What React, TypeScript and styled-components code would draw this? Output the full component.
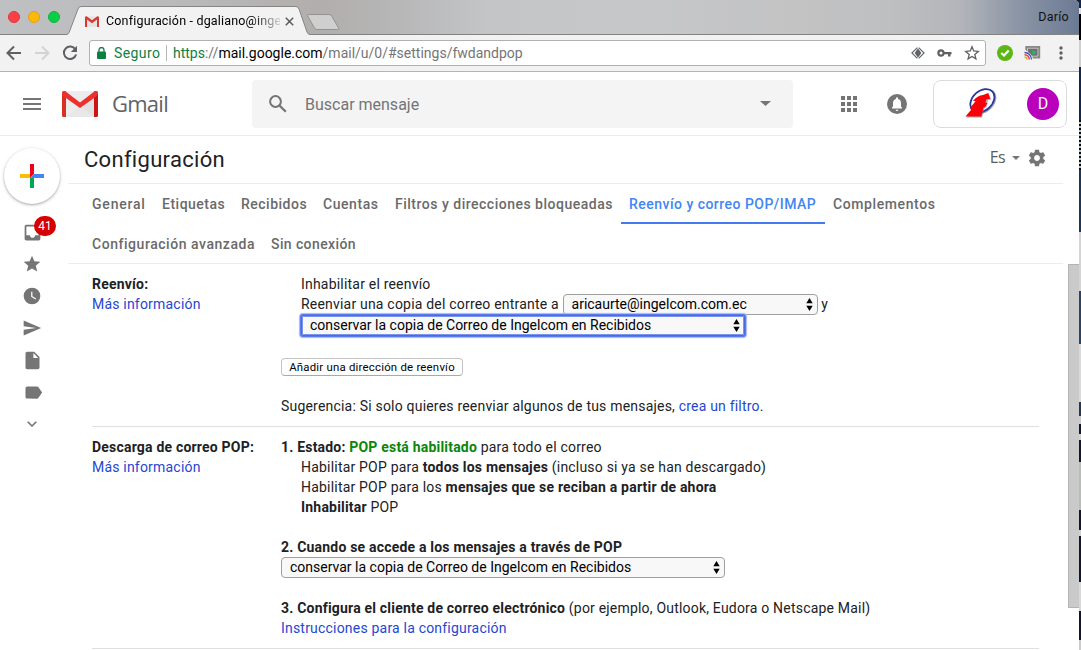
import React from "react";
import styled, { createGlobalStyle, css } from "styled-components";

const Global = createGlobalStyle`
  *, *::before, *::after { box-sizing: border-box; }
  body { margin: 0; overflow: hidden; background: #fff; font-family: Roboto, "Liberation Sans", sans-serif; }
  svg { display: block; flex: none; }
`;

const Desktop = styled.div`
  display: flex;
  width: 1081px;
  height: 650px;
  background: #101c38;
  overflow: hidden;
`;
const Window = styled.div`
  display: flex;
  flex-direction: column;
  width: 1079px;
  height: 650px;
  background: #fff;
  border-top-right-radius: 5px;
  overflow: hidden;
`;
const DesktopEdge = styled.div`
  width: 2px;
  background: linear-gradient(
    #13264a 0 8px, #ddd 8px 14px, #000 14px 40px, #cfcfcf 40px 67px, #10264a 67px 120px,
    transparent 120px 170px, #1c3658 170px 232px, #d4d4d4 232px 291px, #2b4263 291px 344px,
    #dadada 344px 402px, #26364f 402px 416px, #c9c9c9 416px 424px, #14142a 424px 434px,
    #d0d0d0 434px 440px, #14142a 440px 462px, #b9bdb9 462px 510px, #14142a 510px 530px,
    #d0d0d0 530px 536px, #14142a 536px 582px, #d8d8d8 582px 611px, #14142a 611px 640px, #ccc 640px
  ), repeating-linear-gradient(#060c14 0 2px, #b9c2bf 2px 4px);
`;

/* Browser frame */
const TitleBar = styled.div`
  display: flex;
  align-items: center;
  height: 35px;
  padding-right: 10px;
  border-bottom: 1px solid #828282;
  background: linear-gradient(90deg, #bfc0c2 0, #b9b9ba 190px, #b1aeac 320px, #b7b7b8 400px, #c4c5c7 490px, #c6c7c9 640px, #c3c3c4 790px, #bebfc0 890px, #b2b5ba 960px, #8b94a5 1020px, #6b7a94 1079px);
`;
const Lights = styled.div`
  display: flex;
  gap: 8px;
  width: 67px;
  padding-left: 8px;
`;
const Light = styled.span<{ $color: string; $edge: string }>`
  width: 12px;
  height: 12px;
  border-radius: 50%;
  background: ${(p) => p.$color};
  border: 1px solid ${(p) => p.$edge};
`;
const Tab = styled.div`
  position: relative;
  display: flex;
  align-items: center;
  align-self: flex-end;
  width: 243px;
  height: 29px;
  margin-bottom: -1px;
  padding: 1px 0 0 18px;
`;
const TabShape = styled.svg`
  position: absolute;
  left: 0;
  top: 0;
`;
const TabLabel = styled.span`
  position: relative;
  width: 174px;
  height: 18px;
  margin: 0 5px 0 7px;
  white-space: nowrap;
  font: 12.5px/18px Roboto, sans-serif;
  letter-spacing: 0.18px;
  color: #000;
  mask-image: linear-gradient(90deg, #000 146px, transparent 178px);
`;
const TabIcon = styled.svg`
  position: relative;
`;
const NewTab = styled.svg`
  margin-left: -5px;
  margin-top: 10px;
`;
const ProfileName = styled.span`
  margin-left: auto;
  font: 12.5px/16px Roboto, sans-serif;
  letter-spacing: 0.25px;
  color: #111;
`;
const Toolbar = styled.div`
  display: flex;
  align-items: center;
  height: 37px;
  padding: 0 9px 0 5px;
  background: #f2f2f2;
  border-bottom: 1px solid #b3b3b3;
`;
const NavButtons = styled.div`
  display: flex;
  flex: none;
  gap: 10px;
  width: 84px;
`;
const Omnibox = styled.div`
  display: flex;
  flex: none;
  align-items: center;
  width: 897px;
  height: 26px;
  padding: 0 5px 0 7px;
  border: 1px solid #b1b1b1;
  border-radius: 3px;
  background: #fff;
  font: 14px/22px Roboto, sans-serif;
`;
const Secure = styled.span`
  width: 46px;
  margin-left: 8px;
  color: #0b8043;
  letter-spacing: 0.4px;
  white-space: nowrap;
`;
const Divider = styled.span`
  width: 1px;
  height: 16px;
  margin: 0 6px;
  background: #b5b5b5;
`;
const Url = styled.span`
  flex: 1;
  color: #757575;
  letter-spacing: 0;
  white-space: nowrap;
  b { font-weight: 400; color: #0b8043; }
  strong { font-weight: 400; color: #000; }
`;
const OmniIcons = styled.div`
  display: flex;
  align-items: center;
  gap: 12px;
`;
const Extensions = styled.div`
  display: flex;
  align-items: center;
  gap: 11px;
  margin-left: 11px;
`;

/* Gmail header */
const Header = styled.header`
  display: flex;
  align-items: center;
  height: 64px;
  padding: 0 12px 0 23px;
  border-bottom: 1px solid #ebebeb;
`;
const Brand = styled.div`
  display: flex;
  align-items: center;
  width: 229px;
`;
const BrandName = styled.span`
  margin: -2px 0 0 14px;
  font: 22px/28px "Open Sans", Roboto, sans-serif;
  letter-spacing: -0.75px;
  color: #5f6368;
`;
const Search = styled.div`
  display: flex;
  align-items: center;
  width: 541px;
  height: 48px;
  padding: 0 22px 0 17px;
  border-radius: 4px;
  background: #f4f4f4;
`;
const SearchText = styled.span`
  flex: 1;
  margin: 2px 0 0 18px;
  font-size: 16px;
  color: #747474;
`;
const HeaderIcons = styled.div`
  display: flex;
  align-items: center;
  gap: 30px;
  width: 140px;
  padding-left: 48px;
`;
const Account = styled.div`
  display: flex;
  align-items: center;
  justify-content: space-between;
  width: 134px;
  height: 48px;
  padding: 0 7px 0 29px;
  border: 1px solid #dadce0;
  border-radius: 8px;
`;
const Avatar = styled.span`
  width: 32px;
  height: 32px;
  border-radius: 50%;
  background: #b900bd;
  color: #fff;
  font: 16px/32px Roboto, sans-serif;
  text-align: center;
`;

/* Body */
const Body = styled.div`
  display: flex;
  flex: 1;
  min-height: 0;
`;
const Rail = styled.nav`
  display: flex;
  flex-direction: column;
  align-items: center;
  width: 68px;
  padding: 12px 4px 0 0;
`;
const Compose = styled.button`
  display: flex;
  align-items: center;
  justify-content: center;
  width: 56px;
  height: 56px;
  margin-bottom: 12px;
  border: 0;
  border-radius: 50%;
  background: #fff;
  box-shadow: 0 1px 2px rgba(60, 64, 67, 0.32), 0 1px 3px 1px rgba(60, 64, 67, 0.12);
`;
const RailItem = styled.div`
  position: relative;
  display: flex;
  align-items: center;
  justify-content: center;
  width: 56px;
  height: 32px;
`;
const Badge = styled.span`
  position: absolute;
  left: 30px;
  top: 0;
  width: 22px;
  height: 20px;
  border-radius: 10px;
  background: #d50000;
  color: #fff;
  font: 12px/20px Roboto, sans-serif;
  text-align: center;
`;
const Main = styled.main`
  display: flex;
  flex-direction: column;
  width: 995px;
`;
const TitleRow = styled.div`
  display: flex;
  align-items: center;
  height: 48px;
  padding: 0 16px 0 16px;
  border-bottom: 1px solid #ececec;
`;
const Title = styled.h1`
  flex: 1;
  margin: 0;
  font: 400 22px/28px Roboto, sans-serif;
  letter-spacing: 0.3px;
  color: #202124;
`;
const Lang = styled.span`
  margin-top: -5px;
  font: 16px/20px "Open Sans", sans-serif;
  letter-spacing: -0.6px;
  color: #5c5c5c;
`;
const LangIcons = styled.div`
  display: flex;
  align-items: center;
  gap: 7px;
  margin: -3px 0 0 7px;
`;
const Tabs = styled.div`
  display: flex;
  flex-wrap: wrap;
  height: 80px;
  padding: 0 100px 0 16px;
  border-bottom: 1px solid #ececec;
`;
const SettingsTab = styled.a<{ $w: number; $ls: number; $active?: boolean }>`
  width: ${(p) => p.$w}px;
  height: 40px;
  padding: 0 8px;
  font: 500 14px/40px Roboto, sans-serif;
  letter-spacing: ${(p) => p.$ls}px;
  white-space: nowrap;
  color: #6a6a6a;
  ${(p) => p.$active && css`
    color: #4285f4;
    box-shadow: inset 0 -2px #4479f2;
  `}
`;
const Content = styled.div`
  padding: 0 24px;
`;
const Section = styled.section<{ $h: number }>`
  display: flex;
  height: ${(p) => p.$h}px;
  padding-top: 10px;
  border-bottom: 1px solid #dfdfdf;
  font-size: 14px;
  color: #202124;
`;
const Side = styled.div`
  width: 189px;
`;
const Fields = styled.div`
  flex: 1;
`;
const Line = styled.div<{ $indent?: boolean; $gap?: number }>`
  display: flex;
  align-items: center;
  height: 20px;
  margin-top: ${(p) => p.$gap ?? 0}px;
  padding-left: ${(p) => (p.$indent ? 20 : 0)}px;
  letter-spacing: 0.2px;
  white-space: pre;
`;
const Link = styled.a`
  color: #2546d2;
`;
const Ok = styled.b`
  color: #0a860a;
`;
const SelectBox = styled.div<{ $w: number; $focus?: boolean }>`
  display: flex;
  flex: none;
  align-items: center;
  justify-content: space-between;
  width: ${(p) => p.$w}px;
  height: 21px;
  padding: 0 4px 0 8px;
  border: 1px solid #a0a0a0;
  border-radius: 4px;
  background: #f8f8f8;
  color: #000;
  letter-spacing: 0;
  white-space: nowrap;
  ${(p) => p.$focus && css`
    border-color: #4a6be0;
    border-radius: 2px;
    box-shadow: 0 0 0 1px #5b7cf0, 0 0 1px 2px #a3b6fa, inset 0 0 0 1px #7b95ee;
  `}
`;
const AddButton = styled.button`
  display: block;
  width: 182px;
  height: 18px;
  margin-top: 23px;
  padding: 1px 0 0;
  border: 1px solid #c4c4c4;
  border-bottom-color: #a9a9a9;
  border-radius: 4px;
  background: #fff;
  font: 11.4px/15px Roboto, sans-serif;
  letter-spacing: 0.22px;
  color: #000;
`;
const ScrollTrack = styled.div`
  display: flex;
  width: 11px;
  margin: 128px 0 0 5px;
`;
const ScrollThumb = styled.div`
  width: 11px;
  height: 344px;
  background: #cacaca;
  border: 1px solid #b4b4b4;
  border-right: 0;
`;

const Icon = ({ d, size = 24, color = "#757575", box = "0 0 24 24" }: { d: string; size?: number; color?: string; box?: string }) => (
  <svg width={size} height={size} viewBox={box} fill={color}>
    <path d={d} />
  </svg>
);

const Envelope = ({ w, h }: { w: number; h: number }) => (
  <svg width={w} height={h} viewBox="0 0 36 26" preserveAspectRatio="none">
    <rect x="2" width="32" height="26" rx="1" fill="#ececec" />
    <path d="M18 15 5 26h26z" fill="#e0e0e0" />
    <path d="M5 26 18 15 31 26z" fill="#e8e8e8" />
    <path d="M18 15 32 3v23z" fill="#dadada" opacity=".6" />
    <path d="M0 2.5C0 0 2.6-.6 4 .8V26H1.5Q0 26 0 24.5z" fill="#d93025" />
    <path d="M36 2.5C36 0 33.4-.6 32 .8V26h2.500Q36 26 36 24.500z" fill="#cc1417" />
    <path d="M0 2.600C0 0 2.500-.5 4 .8L18 11.500 32 .8C33.500-.5 36 0 36 2.600 36 4 35.300 4.600 34.500 5.200L18 17 1.500 5.200C.7 4.600 0 4 0 2.600z" fill="#ee2f2f" />
  </svg>
);

const Arrows = () => (
  <svg width="7" height="13" viewBox="0 0 7 13">
    <path d="M3.500 0 6.700 5.300H.3zM3.500 13 6.700 7.700H.3z" fill="#000" />
  </svg>
);

const Caret = ({ w, h }: { w: number; h: number }) => (
  <svg width={w} height={h} viewBox="0 0 10 5" preserveAspectRatio="none">
    <path d="M0 0h10L5 5z" fill="#757575" />
  </svg>
);

const CompanyLogo = () => (
  <svg width="34" height="32" viewBox="0 0 34 32">
    <ellipse cx="20.200" cy="13.400" rx="14" ry="10" transform="rotate(-42 20.200 13.400)" fill="#fff" stroke="#a5a9bb" strokeWidth="1.500" />
    <ellipse cx="19.400" cy="12.700" rx="13.600" ry="9.800" transform="rotate(-42 19.400 12.700)" fill="#fff" stroke="#2b3a98" strokeWidth="1.800" />
    <path d="M3.500 29.500 10 21.500H8.500L12 14h2L19 9l7-2.500L28.500 11.500 25 12 23.500 19l-2 1.500L19 29.500z" fill="#77777f" opacity=".6" />
    <path d="M2.500 28.500 9.200 20.500H6.700L12.700 13H9.900Q14.500 7.600 20 7L25.300 5 27.200 10.700 23.500 11.200 22.300 14.500 24.500 15 22 19 20.500 19.500 18.300 28.500z" fill="#fb0009" />
  </svg>
);

const railIcons: { d: string; size: number; box?: string }[] = [
  { size: 20, d: "M12 17.270 18.180 21l-1.640-7.030L22 9.240l-7.190-.61L12 2 9.190 8.630 2 9.240l5.460 4.730L5.820 21z" },
  { size: 20, d: "M12 2a10 10 0 1 0 0 20 10 10 0 0 0 0-20zm4.200 14.200L11 13V7h1.500v5.200l4.500 2.700z" },
  { size: 20, d: "M2.010 21 23 12 2.010 3 2 10l15 2-15 2z" },
  { size: 21, d: "M14 2H6c-1.100 0-2 .9-2 2v16c0 1.100.9 2 2 2h12c1.100 0 2-.9 2-2V8zm-1 7V3.500L18.500 9z" },
  { size: 21, box: "-1 0 24 24", d: "M17.630 5.840C17.270 5.330 16.670 5 16 5L5 5.010C3.900 5.010 3 5.900 3 7v10c0 1.100.9 1.990 2 1.990L16 19c.67 0 1.270-.33 1.630-.84L22 12z" },
];

const tabs: { label: string; w: number; ls: number; active?: boolean }[] = [
  { label: "General", w: 70, ls: 0.8 },
  { label: "Etiquetas", w: 79, ls: 0.5 },
  { label: "Recibidos", w: 82, ls: 0.5 },
  { label: "Cuentas", w: 72, ls: 0.55 },
  { label: "Filtros y direcciones bloqueadas", w: 234, ls: 0.5 },
  { label: "Reenvío y correo POP/IMAP", w: 204, ls: 0.47, active: true },
  { label: "Complementos", w: 118, ls: 0.6 },
  { label: "Configuración avanzada", w: 179, ls: 0.54 },
  { label: "Sin conexión", w: 102, ls: 0.4 },
];

const keepCopy = "conservar la copia de Correo de Ingelcom en Recibidos";

export default function App() {
  return (
    <Desktop>
      <Global />
      <Window>
        <TitleBar>
          <Lights>
            <Light $color="#fc4048" $edge="#e2343d" />
            <Light $color="#fdb90b" $edge="#e0a210" />
            <Light $color="#08cf45" $edge="#12b33d" />
          </Lights>
          <Tab>
            <TabShape width="243" height="29" viewBox="0 0 243 29">
              <path d="M0 29V28.500Q1.500 28 2.300 26L11 3Q12 .5 14 .5H229Q231 .5 232 3L240 26Q241 28.500 243 28.500V29z" fill="#f2f2f2" />
              <path d="M0 28.500Q1.500 28 2.300 26L11 3Q12 .5 14 .5H229Q231 .5 232 3L240 26Q241 28.500 243 28.500" fill="none" stroke="#858585" />
            </TabShape>
            <TabIcon width="14" height="11" viewBox="0 0 14 11">
              <path d="M1 .5h12V11H1z" fill="#e4e4e4" />
              <path d="M0 1.500Q.2-.2 2 .4L7 4.300 12 .4Q13.800-.2 14 1.500V11H12V3.500L7 7.300 2 3.500V11H0z" fill="#d8392f" />
            </TabIcon>
            <TabLabel>Configuración - dgaliano@inge</TabLabel>
            <TabIcon width="9" height="9" viewBox="0 0 9 9">
              <path d="M.8.8 8.200 8.200M8.200.8.800 8.200" stroke="#5a5a5a" strokeWidth="1.500" />
            </TabIcon>
          </Tab>
          <NewTab width="36" height="17" viewBox="0 0 36 17">
            <path d="M3.500.5H24Q26 .5 27 2.500L33.500 14Q34.500 15.500 32.500 15.500H12Q10 15.500 9.200 13.500L2.700 2Q2.200.5 3.500.5z" fill="#cfcfcf" stroke="#929292" />
          </NewTab>
          <ProfileName>Darío</ProfileName>
        </TitleBar>

        <Toolbar>
          <NavButtons>
            <svg width="18" height="18" viewBox="0 0 18 18" fill="none" stroke="#5f6063" strokeWidth="2">
              <path d="M16 9H3.500M9 2.500 2.500 9 9 15.500" />
            </svg>
            <svg width="18" height="18" viewBox="0 0 18 18" fill="none" stroke="#d3d3d3" strokeWidth="2">
              <path d="M2 9H14.500M9 2.500 15.500 9 9 15.500" />
            </svg>
            <svg width="18" height="18" viewBox="0 0 18 18">
              <path d="M14.400 5.500A6.200 6.200 0 1 0 15.100 10.500" fill="none" stroke="#5f6063" strokeWidth="2" />
              <path d="M16 1.800V8H9.800z" fill="#5f6063" />
            </svg>
          </NavButtons>
          <Omnibox>
            <svg width="9" height="12" viewBox="0 0 9 12">
              <rect y="4.500" width="9" height="7.500" rx="1" fill="#0b8043" />
              <path d="M2 5V3a2.500 2.500 0 0 1 5 0V5" fill="none" stroke="#0b8043" strokeWidth="1.300" />
            </svg>
            <Secure>Seguro</Secure>
            <Divider />
            <Url><b>https</b>://<strong>mail.google.com</strong>/mail/u/0/#settings/fwdandpop</Url>
            <OmniIcons>
              <svg width="14" height="12" viewBox="0 0 14 12">
                <path d="M7 1.200 10.300 6 7 10.800 3.700 6z" fill="#5f6368" />
                <path d="M6.300.7.900 6l5.400 5.300M7.700.7 13.100 6l-5.400 5.300" fill="none" stroke="#5f6368" strokeWidth="1.100" />
              </svg>
              <svg width="15" height="8" viewBox="0 0 15 8">
                <circle cx="4" cy="4" r="2.600" fill="none" stroke="#5f6063" strokeWidth="2.200" />
                <path d="M7 2.900h7.500v2.300H13.500V7.500H11V5.200H7z" fill="#5f6063" />
              </svg>
              <svg width="16" height="16" viewBox="0 0 16 16">
                <path d="M8 1.800 9.700 6l4.600.4-3.500 3 1.100 4.500L8 11.500l-3.900 2.400 1.100-4.500-3.500-3L6.300 6z" fill="none" stroke="#5f6063" strokeWidth="1.300" />
              </svg>
            </OmniIcons>
          </Omnibox>
          <Extensions>
            <svg width="16" height="16" viewBox="0 0 16 16">
              <circle cx="8" cy="8" r="8" fill="#5cb615" />
              <path d="M4.200 8 7 10.500 11.700 5.500" fill="none" stroke="#fff" strokeWidth="2.300" />
            </svg>
            <svg width="17" height="16" viewBox="0 0 17 16">
              <path d="M2 5V1.700h13.500v11H8" fill="#6f6f6f" stroke="#8a8a8a" strokeWidth="1.400" />
              <path d="M3.500 3.200h10.500v8H3.500z" fill="none" stroke="#e0e0e0" strokeWidth=".8" />
              <path d="M8.500 5v5l4-2.500z" fill="#19c35b" />
              <path d="M0 6A9 9 0 0 1 9 15H0z" fill="#f2f2f2" />
              <path d="M.5 7.500A7 7 0 0 1 7.500 14.500" fill="none" stroke="#3455c8" strokeWidth="1.300" />
              <path d="M.5 9.700A4.800 4.800 0 0 1 5.300 14.500" fill="none" stroke="#df3b32" strokeWidth="1.400" />
              <path d="M.5 12A2.500 2.500 0 0 1 3 14.500" fill="none" stroke="#e9a823" strokeWidth="1.500" />
            </svg>
            <svg width="18" height="14" viewBox="0 0 18 14" fill="#5f6063">
              <circle cx="9" cy="2" r="1.700" /><circle cx="9" cy="7" r="1.700" /><circle cx="9" cy="12" r="1.700" />
            </svg>
          </Extensions>
        </Toolbar>

        <Header>
          <Brand>
            <svg width="39" height="12" viewBox="0 0 39 12"><path d="M0 0h18v2H0zM0 5h18v2H0zM0 10h18v2H0z" fill="#757575" /></svg>
            <Envelope w={36} h={26} />
            <BrandName>Gmail</BrandName>
          </Brand>
          <Search>
            <svg width="18" height="18" viewBox="0 0 18 18" fill="none" stroke="#757575" strokeWidth="2">
              <circle cx="6.500" cy="6.500" r="5.400" /><path d="m10.500 10.500 6.300 6.300" strokeWidth="2.300" />
            </svg>
            <SearchText>Buscar mensaje</SearchText>
            <Caret w={11} h={5} />
          </Search>
          <HeaderIcons>
            <Icon size={16} box="4 4 16 16" d="M4 8h4V4H4zm6 12h4v-4h-4zm-6 0h4v-4H4zm0-6h4v-4H4zm6 0h4v-4h-4zm6-10v4h4V4zm-6 4h4V4h-4zm6 6h4v-4h-4zm0 6h4v-4h-4z" />
            <svg width="20" height="20" viewBox="0 0 20 20">
              <circle cx="10" cy="10" r="10" fill="#757575" />
              <path d="M10 17a1.400 1.400 0 0 0 1.400-1.200H8.600A1.400 1.400 0 0 0 10 17zm5-3.600V14.600H5V13.400L6 12.400V9Q6 5.600 9 4.900V4.300a1 1 0 0 1 2 0v.6Q14 5.600 14 9v3.400z" fill="#fff" />
            </svg>
          </HeaderIcons>
          <Account>
            <CompanyLogo />
            <Avatar>D</Avatar>
          </Account>
        </Header>

        <Body>
          <Rail>
            <Compose>
              <svg width="24" height="24" viewBox="0 0 24 24">
                <path d="M10 0h4v10l-4 4z" fill="#f00020" /><path d="M0 10h10v4H0z" fill="#fbbc05" />
                <path d="M14 10h10v4H10z" fill="#4285f4" /><path d="M10 14h4v10h-4z" fill="#00a850" />
              </svg>
            </Compose>
            <RailItem>
              <Icon size={21} d="M19 3H4.990c-1.110 0-1.980.89-1.980 2L3 19c0 1.100.88 2 1.990 2H19c1.100 0 2-.9 2-2V5c0-1.110-.9-2-2-2zm0 12h-4c0 1.660-1.350 3-3 3s-3-1.340-3-3H4.990V5H19v10z" />
              <Badge>41</Badge>
            </RailItem>
            {railIcons.map((icon, i) => (
              <RailItem key={i}><Icon {...icon} /></RailItem>
            ))}
            <RailItem>
              <svg width="10" height="6" viewBox="0 0 10 6" fill="none" stroke="#757575" strokeWidth="1.600"><path d="m.7.7 4.300 4.300L9.300.7" /></svg>
            </RailItem>
          </Rail>

          <Main>
            <TitleRow>
              <Title>Configuración</Title>
              <Lang>Es</Lang>
              <LangIcons>
                <Caret w={8} h={4} />
                <Icon size={20} d="M19.430 12.980c.04-.32.070-.64.070-.98s-.03-.66-.07-.98l2.110-1.650c.19-.15.240-.42.120-.64l-2-3.460c-.12-.22-.39-.3-.61-.22l-2.490 1c-.52-.4-1.080-.73-1.690-.98l-.38-2.650C14.460 2.180 14.250 2 14 2h-4c-.25 0-.46.180-.49.420l-.38 2.650c-.61.250-1.170.59-1.690.98l-2.490-1c-.23-.09-.49 0-.61.220l-2 3.460c-.13.220-.07.490.12.640l2.110 1.650c-.04.320-.07.650-.07.980s.03.660.070.980l-2.110 1.650c-.19.150-.24.420-.12.640l2 3.460c.12.220.39.3.610.220l2.490-1c.52.4 1.080.730 1.690.980l.38 2.650c.03.240.240.420.490.420h4c.25 0 .46-.18.490-.42l.38-2.650c.61-.25 1.170-.59 1.690-.98l2.490 1c.23.090.49 0 .61-.22l2-3.460c.12-.22.070-.49-.12-.64zM12 15.500c-1.930 0-3.500-1.570-3.500-3.500s1.570-3.500 3.500-3.500 3.500 1.570 3.500 3.500-1.570 3.500-3.500 3.500z" />
              </LangIcons>
            </TitleRow>
            <Tabs>
              {tabs.map((t) => (
                <SettingsTab key={t.label} $w={t.w} $ls={t.ls} $active={t.active}>{t.label}</SettingsTab>
              ))}
            </Tabs>
            <Content>
              <Section $h={163}>
                <Side>
                  <Line><b>Reenvío:</b></Line>
                  <Line><Link>Más información</Link></Line>
                </Side>
                <Fields>
                  <Line $indent>Inhabilitar el reenvío</Line>
                  <Line $indent>
                    Reenviar una copia del correo entrante a{" "}
                    <SelectBox $w={255}>aricaurte@ingelcom.com.ec<Arrows /></SelectBox>{" "}
                    <span> y</span>
                  </Line>
                  <Line $indent $gap={1}><SelectBox $w={444} $focus>{keepCopy}<Arrows /></SelectBox></Line>
                  <AddButton>Añadir una dirección de reenvío</AddButton>
                  <Line $gap={20}>Sugerencia: Si solo quieres reenviar algunos de tus mensajes, <Link>crea un filtro</Link>.</Line>
                </Fields>
              </Section>
              <Section $h={222}>
                <Side>
                  <Line><b>Descarga de correo POP:</b></Line>
                  <Line><Link>Más información</Link></Line>
                </Side>
                <Fields>
                  <Line><b>1. Estado: </b><Ok>POP está habilitado</Ok> para todo el correo</Line>
                  <Line $indent>Habilitar POP para <b>todos los mensajes</b> (incluso si ya se han descargado)</Line>
                  <Line $indent>Habilitar POP para los <b>mensajes que se reciban a partir de ahora</b></Line>
                  <Line $indent><b>Inhabilitar</b> POP</Line>
                  <Line $gap={20}><b>2. Cuando se accede a los mensajes a través de POP</b></Line>
                  <Line><SelectBox $w={444}>{keepCopy}<Arrows /></SelectBox></Line>
                  <Line $gap={21}><b>3. Configura el cliente de correo electrónico</b> (por ejemplo, Outlook, Eudora o Netscape Mail)</Line>
                  <Line><Link>Instrucciones para la configuración</Link></Line>
                </Fields>
              </Section>
            </Content>
          </Main>
          <ScrollTrack><ScrollThumb /></ScrollTrack>
        </Body>
      </Window>
      <DesktopEdge />
    </Desktop>
  );
}
